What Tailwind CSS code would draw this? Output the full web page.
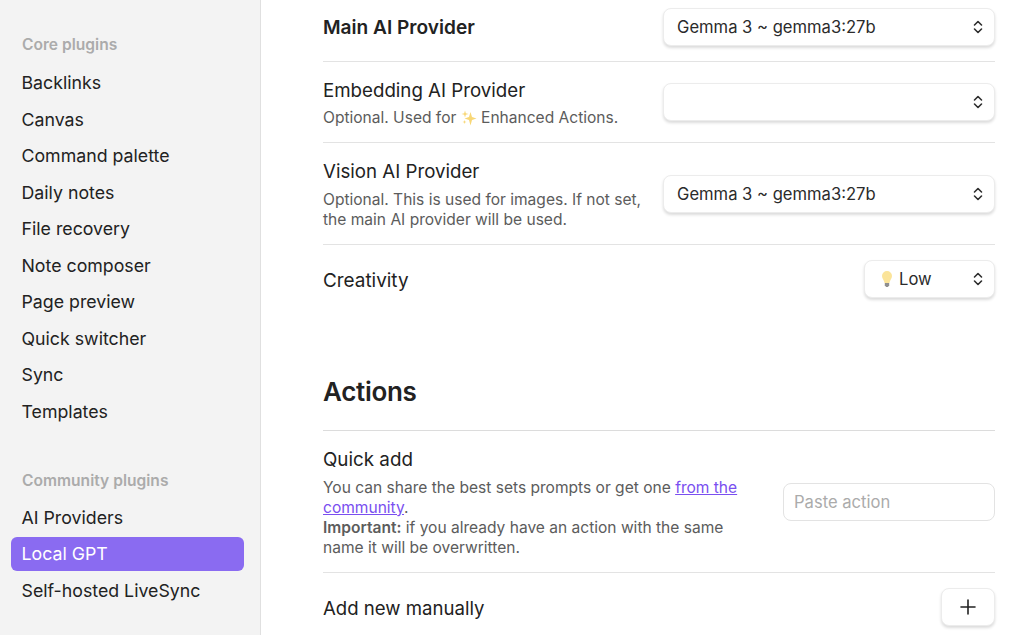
<!DOCTYPE html>
<html lang="en">
<head>
<meta charset="utf-8">
<title>Local GPT settings</title>
<script src="https://cdn.jsdelivr.net/npm/@tailwindcss/browser@4"></script>
</head>
<body class="m-0 bg-white font-['Inter','Liberation_Sans',sans-serif] text-[#222222] overflow-hidden">
<div class="flex h-[635px] w-[1024px] overflow-hidden">
  <aside class="w-[261px] h-full shrink-0 bg-[#f3f3f3] border-r border-[#e0e0e0] pl-[11px] pr-[16px] pt-[35px] text-[17.75px] leading-[24px]">
    <div class="pl-[11px] h-[20px] leading-[20px] text-[15.6px] font-semibold text-[#ababab] mb-[9.75px]">Core plugins</div>
    <div class="flex flex-col">
      <div class="h-[36.5px] pl-[10.5px] flex items-center">Backlinks</div>
      <div class="h-[36.5px] pl-[10.5px] flex items-center">Canvas</div>
      <div class="h-[36.5px] pl-[10.5px] flex items-center">Command palette</div>
      <div class="h-[36.5px] pl-[10.5px] flex items-center">Daily notes</div>
      <div class="h-[36.5px] pl-[10.5px] flex items-center">File recovery</div>
      <div class="h-[36.5px] pl-[10.5px] flex items-center">Note composer</div>
      <div class="h-[36.5px] pl-[10.5px] flex items-center">Page preview</div>
      <div class="h-[36.5px] pl-[10.5px] flex items-center">Quick switcher</div>
      <div class="h-[36.5px] pl-[10.5px] flex items-center">Sync</div>
      <div class="h-[36.5px] pl-[10.5px] flex items-center">Templates</div>
    </div>
    <div class="pl-[11px] mt-[41.25px] h-[20px] leading-[20px] text-[15.6px] font-semibold text-[#ababab] mb-[8.5px]">Community plugins</div>
    <div class="flex flex-col">
      <div class="h-[36px] pl-[10.5px] flex items-center">AI Providers</div>
      <div class="h-[34px] mt-[1px] mb-[2px] pl-[10.5px] flex items-center rounded-[6px] bg-[#8a6bf1] text-white">Local GPT</div>
      <div class="h-[36.5px] pl-[10.5px] flex items-center">Self-hosted LiveSync</div>
    </div>
  </aside>
  <main class="flex-1 min-w-0 pl-[62px] pr-[29px] flex flex-col">
    <section class="h-[62px] shrink-0 flex items-start justify-between border-b border-[#e3e3e3] pt-[8px]">
      <div class="text-[19.1px] leading-[38px] font-semibold">Main AI Provider</div>
      <div class="w-[332px] h-[38px] shrink-0 flex items-center justify-between pl-[13px] pr-[10px] rounded-[8px] bg-white border border-[#ececec] shadow-[0_2px_3px_rgba(0,0,0,0.14)] text-[16.6px] text-[#2b2b2b]">
        <span>Gemma 3 ~ gemma3:27b</span>
        <svg class="w-[12px] h-[16px]" viewBox="0 0 12 16" fill="none" stroke="#2e2e2e" stroke-width="1.6" stroke-linecap="round" stroke-linejoin="round"><path d="M2.5 6 6 2.5 9.500 6M2.500 10 6 13.500 9.500 10"/></svg>
      </div>
    </section>
    <section class="h-[81px] shrink-0 flex items-center justify-between border-b border-[#e3e3e3]">
      <div class="flex flex-col">
        <div class="text-[18.7px] leading-[24px] mb-[5px] mt-[3px]">Embedding AI Provider</div>
        <div class="text-[15.55px] leading-[20px] text-[#5c5c5c] flex items-center">Optional. Used for&nbsp;<svg class="w-[16px] h-[16px]" viewBox="0 0 16 16" fill="#f8d776"><path d="M9.500 2 11 7 15.500 8.500 11 10 9.500 15.500 8 10 3.500 8.500 8 7Z"/><path d="M4 0.500 4.800 3.200 7.500 4 4.800 4.800 4 7.500 3.200 4.800 0.500 4 3.200 3.200Z"/><path d="M3.500 10 4 11.500 5.500 12 4 12.500 3.500 14 3 12.500 1.500 12 3 11.500Z"/></svg>&nbsp;Enhanced Actions.</div>
      </div>
      <div class="w-[332px] h-[38px] shrink-0 flex items-center justify-end pl-[13px] pr-[10px] rounded-[8px] bg-white border border-[#ececec] shadow-[0_2px_3px_rgba(0,0,0,0.14)]">
        <svg class="w-[12px] h-[16px]" viewBox="0 0 12 16" fill="none" stroke="#2e2e2e" stroke-width="1.6" stroke-linecap="round" stroke-linejoin="round"><path d="M2.5 6 6 2.5 9.500 6M2.500 10 6 13.500 9.500 10"/></svg>
      </div>
    </section>
    <section class="h-[102px] shrink-0 flex items-center justify-between border-b border-[#e3e3e3]">
      <div class="flex flex-col w-[325px]">
        <div class="text-[18.7px] leading-[24px] mb-[6px] mt-[3px]">Vision AI Provider</div>
        <div class="text-[15.55px] leading-[20px] text-[#5c5c5c]">Optional. This is used for images. If not set, the main AI provider will be used.</div>
      </div>
      <div class="w-[332px] h-[38px] shrink-0 flex items-center justify-between pl-[13px] pr-[10px] rounded-[8px] bg-white border border-[#ececec] shadow-[0_2px_3px_rgba(0,0,0,0.14)] text-[16.6px] text-[#2b2b2b]">
        <span class="pt-[1px]">Gemma 3 ~ gemma3:27b</span>
        <svg class="w-[12px] h-[16px]" viewBox="0 0 12 16" fill="none" stroke="#2e2e2e" stroke-width="1.6" stroke-linecap="round" stroke-linejoin="round"><path d="M2.5 6 6 2.5 9.500 6M2.500 10 6 13.500 9.500 10"/></svg>
      </div>
    </section>
    <section class="h-[70px] shrink-0 flex items-start justify-between pt-[15px]">
      <div class="text-[18.9px] leading-[42px]">Creativity</div>
      <div class="w-[131px] h-[38px] shrink-0 flex items-center justify-between pl-[13px] pr-[10px] rounded-[8px] bg-white border border-[#ececec] shadow-[0_2px_3px_rgba(0,0,0,0.14)] text-[16.6px] text-[#2b2b2b]">
        <span class="flex items-center gap-[5px] ml-[2px]">
          <svg class="w-[14px] h-[18px]" viewBox="0 0 14 18"><path d="M7 1a5 5 0 0 0-5 5c0 2.500 2 4 2.600 7h4.800C10 10 12 8.500 12 6a5 5 0 0 0-5-5Z" fill="#fbe49a"/><path d="M4.800 13h4.400v2.500L7.800 17H6.200L4.800 15.500Z" fill="#8f8f8f"/></svg>
          <span>Low</span>
        </span>
        <svg class="w-[12px] h-[16px]" viewBox="0 0 12 16" fill="none" stroke="#2e2e2e" stroke-width="1.6" stroke-linecap="round" stroke-linejoin="round"><path d="M2.5 6 6 2.5 9.500 6M2.500 10 6 13.500 9.500 10"/></svg>
      </div>
    </section>
    <h2 class="h-[116px] shrink-0 flex items-end pb-[22px] text-[26px] leading-[32px] font-semibold tracking-[-0.3px] border-b border-[#dcdcdc]">Actions</h2>
    <section class="h-[142px] shrink-0 flex items-center justify-between border-b border-[#e3e3e3]">
      <div class="flex flex-col w-[428px] pt-[2px]">
        <div class="text-[18.8px] leading-[24px] mb-[6px]">Quick add</div>
        <div class="text-[15.55px] leading-[20px] text-[#5c5c5c]">You can share the best sets prompts or get one <a class="text-[#7a4ff0] underline" href="#">from the community</a>.<br><b class="font-semibold">Important:</b> if you already have an action with the same name it will be overwritten.</div>
      </div>
      <div class="w-[212px] h-[38px] shrink-0 flex items-center pl-[10px] pt-[2px] rounded-[8px] bg-white border border-[#e3e3e3] text-[16.6px] text-[#ababab]">Paste action</div>
    </section>
    <section class="h-[70px] shrink-0 flex items-start justify-between pt-[15px]">
      <div class="text-[18.6px] leading-[40px]">Add new manually</div>
      <div class="w-[54px] h-[38px] shrink-0 flex items-center justify-center rounded-[8px] bg-white border border-[#ececec] shadow-[0_2px_3px_rgba(0,0,0,0.14)]">
        <svg class="w-[18px] h-[18px]" viewBox="0 0 18 18" fill="none" stroke="#222" stroke-width="1.600" stroke-linecap="round"><path d="M9 2v14M2 9h14"/></svg>
      </div>
    </section>
  </main>
</div>
</body>
</html>
